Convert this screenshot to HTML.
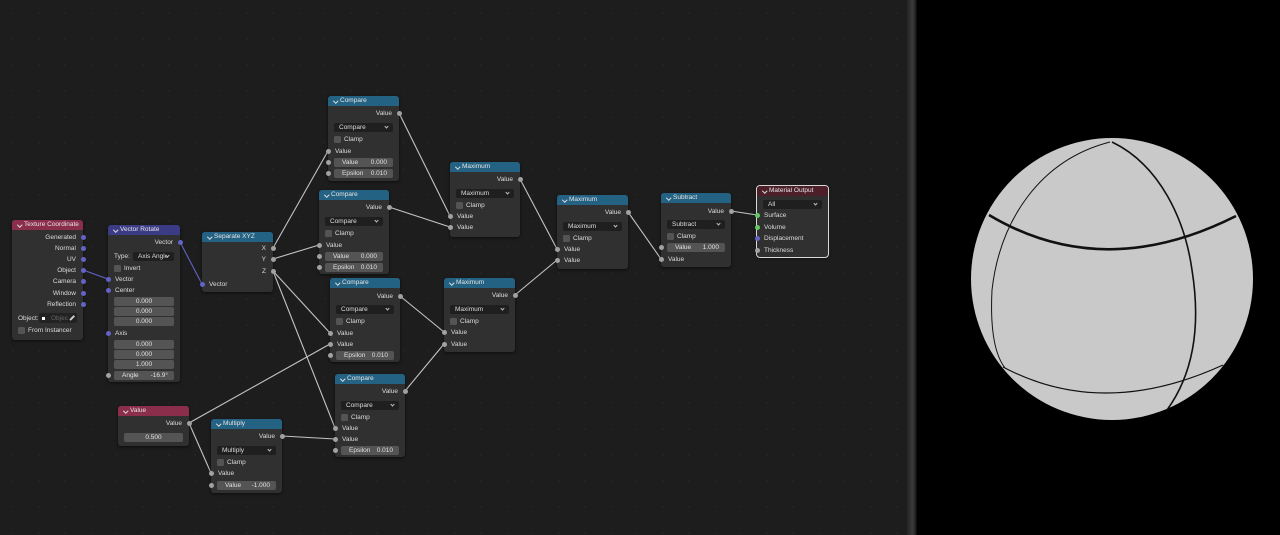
<!DOCTYPE html>
<html><head><meta charset="utf-8">
<style>
*{margin:0;padding:0;box-sizing:border-box}
body{width:1280px;height:535px;overflow:hidden;background:#1d1d1d;font-family:"Liberation Sans",sans-serif;position:relative}
#ed{position:absolute;left:0;top:0;width:907px;height:535px;background-color:#1d1d1d;background-image:radial-gradient(circle,#262626 0.7px,transparent 1px);background-size:26px 26px}
#div{position:absolute;left:907px;top:0;width:10px;height:535px;background:linear-gradient(90deg,#262626 0,#2e2e2e 3px,#3c3c3c 5px,#303030 7px,#1a1a1a 9px,#000 10px)}
#vp{position:absolute;left:917px;top:0;width:363px;height:535px;background:#000}
svg{position:absolute;left:0;top:0}
.n{position:absolute;background:#303030;border-radius:3px;box-shadow:0 1px 3px rgba(0,0,0,.6)}
.h{position:absolute;left:0;top:0;right:0;height:10px;border-radius:3px 3px 0 0;color:#e4e4e4;font-size:6.5px;line-height:10px;padding-left:12px;white-space:nowrap}
.h:before{content:"";position:absolute;left:5.5px;top:2.5px;width:2.5px;height:2.5px;border-right:0.8px solid #ddd;border-bottom:0.8px solid #ddd;transform:rotate(45deg)}
.t{position:absolute;font-size:6.5px;line-height:9px;height:9px;color:#dcdcdc;white-space:nowrap}
.o{right:7px;text-align:right}
.i{left:7px}
.s{position:absolute;width:5px;height:5px;border-radius:50%;background:#a1a1a1}
.sl{left:-2.5px}.sr{right:-2.5px}
.p{background:#6363c7}.g{background:#63c763}
.f{position:absolute;left:6px;right:6px;height:9px;background:#545454;border-radius:2px;font-size:6.5px;line-height:9px;color:#e0e0e0;text-align:center}
.f .a{position:absolute;left:8px}.f .b{position:absolute;right:6px}
.d{position:absolute;left:6px;right:6px;height:9px;background:#1f1f1f;border-radius:2px;font-size:6.5px;line-height:9px;color:#dcdcdc;padding-left:5px;overflow:hidden;white-space:nowrap}
.d:after{content:"";position:absolute;right:5px;top:2.5px;width:2px;height:2px;border-right:0.8px solid #bbb;border-bottom:0.8px solid #bbb;transform:rotate(45deg);background:#1f1f1f}
.c{position:absolute;left:6px;width:7px;height:7px;background:#545454;border-radius:1.5px}
.cl{position:absolute;left:16px;font-size:6.5px;line-height:9px;color:#dcdcdc}
.red{background:#8a2e4c}.pur{background:#3c3c86}.blu{background:#246283}.mo{background:#4c1f29}
</style></head><body>
<div id="ed"></div>
<div id="div"></div>
<div id="vp"></div>

<svg width="1280" height="535">
<g stroke="#c4c4c4" stroke-width="1.1" fill="none">
<line x1="83" y1="270" x2="108" y2="279" stroke="#6363c7"/>
<line x1="180" y1="242" x2="202" y2="284" stroke="#6363c7"/>
<line x1="273" y1="248" x2="328" y2="151"/>
<line x1="273" y1="259" x2="319" y2="245"/>
<line x1="273" y1="271" x2="330" y2="333"/>
<line x1="273" y1="271" x2="335" y2="428"/>
<line x1="189" y1="423" x2="330" y2="344"/>
<line x1="189" y1="423" x2="211" y2="473"/>
<line x1="282" y1="436" x2="335" y2="439"/>
<line x1="399" y1="113" x2="450" y2="216"/>
<line x1="389" y1="207" x2="450" y2="227"/>
<line x1="400" y1="296" x2="444" y2="332"/>
<line x1="405" y1="391" x2="444" y2="344"/>
<line x1="520" y1="179" x2="557" y2="249"/>
<line x1="515" y1="295" x2="557" y2="260"/>
<line x1="628" y1="212" x2="661" y2="259"/>
<line x1="731" y1="211" x2="757" y2="215"/>
</g>
<circle cx="1112" cy="279" r="141" fill="#c9c9c9"/>
<g fill="none" stroke="#111">
<path d="M989,215 Q1103,283 1236,216" stroke-width="2.6"/>
<path d="M1110,142 C1040,160 1000,220 992,290 C990,330 995,355 1005,368" stroke-width="1"/>
<path d="M1112,142 C1160,165 1185,220 1192,270 C1200,320 1196,370 1167,410" stroke-width="1.6"/>
<path d="M1003,367 Q1103,420 1223,365" stroke-width="1.2"/>
</g>
</svg>

<div class="n" style="left:12px;top:220px;width:71px;height:120px">
<div class="h red">Texture Coordinate</div>
<div class="t o" style="top:12.5px">Generated</div><div class="s sr p" style="top:14.5px"></div>
<div class="t o" style="top:23.5px">Normal</div><div class="s sr p" style="top:25.5px"></div>
<div class="t o" style="top:34.5px">UV</div><div class="s sr p" style="top:36.5px"></div>
<div class="t o" style="top:45.5px">Object</div><div class="s sr p" style="top:47.5px"></div>
<div class="t o" style="top:56.5px">Camera</div><div class="s sr p" style="top:58.5px"></div>
<div class="t o" style="top:68.5px">Window</div><div class="s sr p" style="top:70.5px"></div>
<div class="t o" style="top:79.5px">Reflection</div><div class="s sr p" style="top:81.5px"></div>
<div class="t" style="left:6px;top:93.5px">Object:</div>
<div style="position:absolute;left:27px;top:93px;width:38px;height:10px;background:#222;border-radius:2px"></div>
<div style="position:absolute;left:29px;top:95.5px;width:5px;height:5px;background:#fff;border:1px solid #222"></div>
<div class="t" style="left:39px;top:93.5px;color:#666">Objec</div>
<div style="position:absolute;left:57px;top:97px;width:6px;height:1.5px;background:#ccc;transform:rotate(-45deg)"></div>
<div class="c" style="top:107px"></div><div class="cl" style="top:106px">From Instancer</div>
</div>

<div class="n" style="left:108px;top:225px;width:72px;height:157px">
<div class="h pur">Vector Rotate</div>
<div class="t o" style="top:12.5px">Vector</div><div class="s sr p" style="top:14.5px"></div>
<div class="t" style="left:6px;top:26.5px">Type:</div>
<div class="d" style="left:25px;top:26.5px">Axis Angle</div>
<div class="c" style="top:39.5px"></div><div class="cl" style="top:38.5px">Invert</div>
<div class="t i" style="top:49.5px">Vector</div><div class="s sl p" style="top:51.5px"></div>
<div class="t i" style="top:60.5px">Center</div><div class="s sl p" style="top:62.5px"></div>
<div class="f" style="top:71.5px">0.000</div>
<div class="f" style="top:81.5px">0.000</div>
<div class="f" style="top:91.5px">0.000</div>
<div class="t i" style="top:103.5px">Axis</div><div class="s sl p" style="top:105.5px"></div>
<div class="f" style="top:114.5px">0.000</div>
<div class="f" style="top:124.5px">0.000</div>
<div class="f" style="top:134.5px">1.000</div>
<div class="f" style="top:145.5px"><span class="a">Angle</span><span class="b">-16.9°</span></div><div class="s sl" style="top:147.5px"></div>
</div>

<div class="n" style="left:202px;top:232px;width:71px;height:60px">
<div class="h blu">Separate XYZ</div>
<div class="t o" style="top:11.5px">X</div><div class="s sr" style="top:13.5px"></div>
<div class="t o" style="top:22.5px">Y</div><div class="s sr" style="top:24.5px"></div>
<div class="t o" style="top:34.5px">Z</div><div class="s sr" style="top:36.5px"></div>
<div class="t i" style="top:47.5px">Vector</div><div class="s sl p" style="top:49.5px"></div>
</div>

<div class="n" style="left:328px;top:96px;width:71px;height:85px">
<div class="h blu">Compare</div>
<div class="t o" style="top:12.5px">Value</div><div class="s sr" style="top:14.5px"></div>
<div class="d" style="top:26.5px">Compare</div>
<div class="c" style="top:39.5px"></div><div class="cl" style="top:38.5px">Clamp</div>
<div class="t i" style="top:50.5px">Value</div><div class="s sl" style="top:52.5px"></div>
<div class="f" style="top:61.5px"><span class="a">Value</span><span class="b">0.000</span></div><div class="s sl" style="top:63.5px"></div>
<div class="f" style="top:72.5px"><span class="a">Epsilon</span><span class="b">0.010</span></div><div class="s sl" style="top:74.5px"></div>
</div>

<div class="n" style="left:319px;top:190px;width:70px;height:84px">
<div class="h blu">Compare</div>
<div class="t o" style="top:12.5px">Value</div><div class="s sr" style="top:14.5px"></div>
<div class="d" style="top:26.5px">Compare</div>
<div class="c" style="top:39.5px"></div><div class="cl" style="top:38.5px">Clamp</div>
<div class="t i" style="top:50.5px">Value</div><div class="s sl" style="top:52.5px"></div>
<div class="f" style="top:61.5px"><span class="a">Value</span><span class="b">0.000</span></div><div class="s sl" style="top:63.5px"></div>
<div class="f" style="top:72.5px"><span class="a">Epsilon</span><span class="b">0.010</span></div><div class="s sl" style="top:74.5px"></div>
</div>

<div class="n" style="left:330px;top:278px;width:70px;height:84px">
<div class="h blu">Compare</div>
<div class="t o" style="top:13.5px">Value</div><div class="s sr" style="top:15.5px"></div>
<div class="d" style="top:26.5px">Compare</div>
<div class="c" style="top:39.5px"></div><div class="cl" style="top:38.5px">Clamp</div>
<div class="t i" style="top:50.5px">Value</div><div class="s sl" style="top:52.5px"></div>
<div class="t i" style="top:61.5px">Value</div><div class="s sl" style="top:63.5px"></div>
<div class="f" style="top:72.5px"><span class="a">Epsilon</span><span class="b">0.010</span></div><div class="s sl" style="top:74.5px"></div>
</div>

<div class="n" style="left:335px;top:374px;width:70px;height:83px">
<div class="h blu">Compare</div>
<div class="t o" style="top:12.5px">Value</div><div class="s sr" style="top:14.5px"></div>
<div class="d" style="top:26.5px">Compare</div>
<div class="c" style="top:39.5px"></div><div class="cl" style="top:38.5px">Clamp</div>
<div class="t i" style="top:49.5px">Value</div><div class="s sl" style="top:51.5px"></div>
<div class="t i" style="top:60.5px">Value</div><div class="s sl" style="top:62.5px"></div>
<div class="f" style="top:71.5px"><span class="a">Epsilon</span><span class="b">0.010</span></div><div class="s sl" style="top:73.5px"></div>
</div>

<div class="n" style="left:450px;top:162px;width:70px;height:75px">
<div class="h blu">Maximum</div>
<div class="t o" style="top:12.5px">Value</div><div class="s sr" style="top:14.5px"></div>
<div class="d" style="top:26.5px">Maximum</div>
<div class="c" style="top:39.5px"></div><div class="cl" style="top:38.5px">Clamp</div>
<div class="t i" style="top:49.5px">Value</div><div class="s sl" style="top:51.5px"></div>
<div class="t i" style="top:60.5px">Value</div><div class="s sl" style="top:62.5px"></div>
</div>

<div class="n" style="left:444px;top:278px;width:71px;height:74px">
<div class="h blu">Maximum</div>
<div class="t o" style="top:12.5px">Value</div><div class="s sr" style="top:14.5px"></div>
<div class="d" style="top:26.5px">Maximum</div>
<div class="c" style="top:39.5px"></div><div class="cl" style="top:38.5px">Clamp</div>
<div class="t i" style="top:49.5px">Value</div><div class="s sl" style="top:51.5px"></div>
<div class="t i" style="top:61.5px">Value</div><div class="s sl" style="top:63.5px"></div>
</div>

<div class="n" style="left:557px;top:195px;width:71px;height:74px">
<div class="h blu">Maximum</div>
<div class="t o" style="top:12.5px">Value</div><div class="s sr" style="top:14.5px"></div>
<div class="d" style="top:26.5px">Maximum</div>
<div class="c" style="top:39.5px"></div><div class="cl" style="top:38.5px">Clamp</div>
<div class="t i" style="top:49.5px">Value</div><div class="s sl" style="top:51.5px"></div>
<div class="t i" style="top:60.5px">Value</div><div class="s sl" style="top:62.5px"></div>
</div>

<div class="n" style="left:661px;top:193px;width:70px;height:74px">
<div class="h blu">Subtract</div>
<div class="t o" style="top:13.5px">Value</div><div class="s sr" style="top:15.5px"></div>
<div class="d" style="top:26.5px">Subtract</div>
<div class="c" style="top:39.5px"></div><div class="cl" style="top:38.5px">Clamp</div>
<div class="f" style="top:49.5px"><span class="a">Value</span><span class="b">1.000</span></div><div class="s sl" style="top:51.5px"></div>
<div class="t i" style="top:61.5px">Value</div><div class="s sl" style="top:63.5px"></div>
</div>

<div class="n" style="left:757px;top:186px;width:71px;height:71px;outline:1px solid #d8d8d8">
<div class="h mo">Material Output</div>
<div class="d" style="top:13.5px">All</div>
<div class="t i" style="top:24.5px">Surface</div><div class="s sl g" style="top:26.5px"></div>
<div class="t i" style="top:36.5px">Volume</div><div class="s sl g" style="top:38.5px"></div>
<div class="t i" style="top:47.5px">Displacement</div><div class="s sl p" style="top:49.5px"></div>
<div class="t i" style="top:59.5px">Thickness</div><div class="s sl" style="top:61.5px"></div>
</div>

<div class="n" style="left:118px;top:406px;width:71px;height:40px">
<div class="h red">Value</div>
<div class="t o" style="top:12.5px">Value</div><div class="s sr" style="top:14.5px"></div>
<div class="f" style="top:26.5px">0.500</div>
</div>

<div class="n" style="left:211px;top:419px;width:71px;height:74px">
<div class="h blu">Multiply</div>
<div class="t o" style="top:12.5px">Value</div><div class="s sr" style="top:14.5px"></div>
<div class="d" style="top:26.5px">Multiply</div>
<div class="c" style="top:39.5px"></div><div class="cl" style="top:38.5px">Clamp</div>
<div class="t i" style="top:49.5px">Value</div><div class="s sl" style="top:51.5px"></div>
<div class="f" style="top:61.5px"><span class="a">Value</span><span class="b">-1.000</span></div><div class="s sl" style="top:63.5px"></div>
</div>

</body></html>
